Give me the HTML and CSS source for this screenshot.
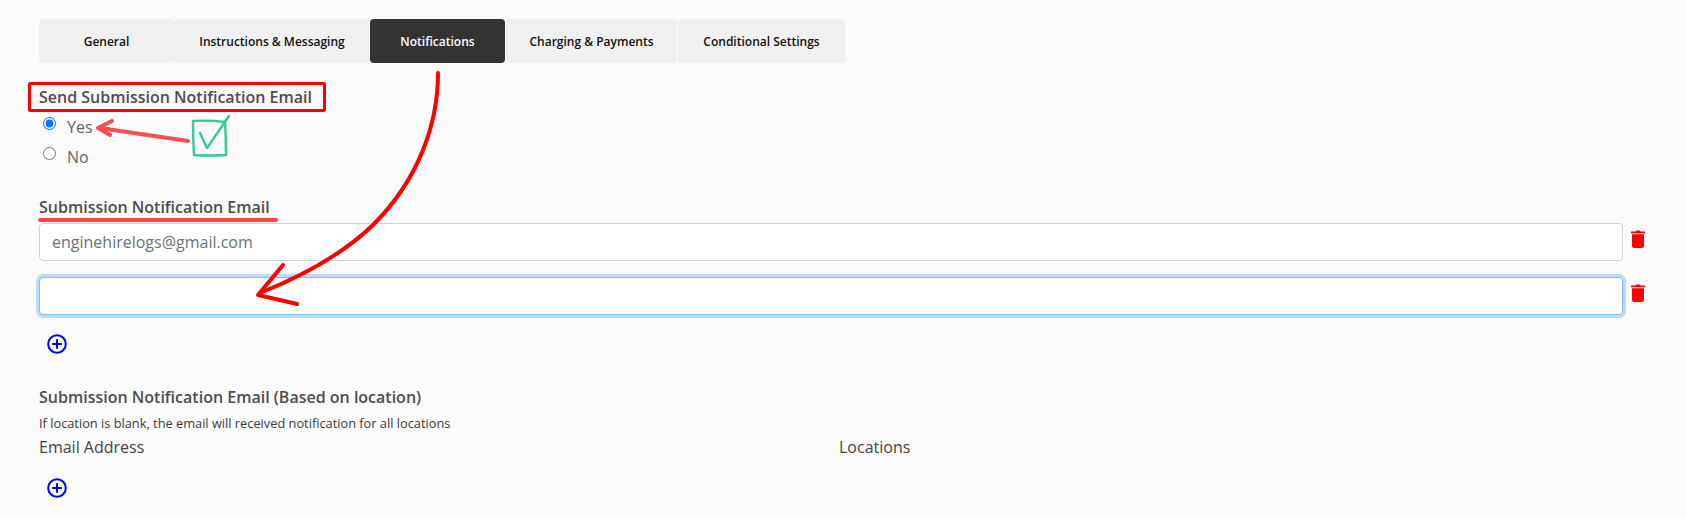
FILE: index.html
```html
<!DOCTYPE html>
<html lang="en">
<head>
<meta charset="utf-8">
<title>Notifications</title>
<link rel="stylesheet" href="styles.css">
</head>
<body>
<main class="page">
  <nav class="tabs">
    <a class="tab tab-general">General</a>
    <a class="tab tab-instructions">Instructions &amp; Messaging</a>
    <a class="tab tab-notifications active">Notifications</a>
    <a class="tab tab-charging">Charging &amp; Payments</a>
    <a class="tab tab-conditional">Conditional Settings</a>
  </nav>

  <section class="send">
    <h2 class="heading">Send Submission Notification Email</h2>
    <div class="radios">
      <label class="radio-row"><input type="radio" name="send" checked><span>Yes</span></label>
      <label class="radio-row"><input type="radio" name="send"><span>No</span></label>
    </div>
  </section>

  <section class="emails">
    <h2 class="heading">Submission Notification Email</h2>
    <div class="email-row">
      <input class="field" type="text" value="enginehirelogs@gmail.com">
      <svg class="trash" viewBox="0 0 14 18"><path d="M4.5 1.6 5.2.5h3.6l.7 1.1H14v1.7H0V1.6zM1 4.3h12V16a2 2 0 0 1-2 2H3a2 2 0 0 1-2-2z"/></svg>
    </div>
    <div class="email-row">
      <input class="field focused" type="text">
      <svg class="trash" viewBox="0 0 14 18"><path d="M4.5 1.6 5.2.5h3.6l.7 1.1H14v1.7H0V1.6zM1 4.3h12V16a2 2 0 0 1-2 2H3a2 2 0 0 1-2-2z"/></svg>
    </div>
    <svg class="plus" viewBox="0 0 20 20"><circle cx="10" cy="10" r="8.8"/><path d="M10 5.2v9.6M5.2 10h9.6"/></svg>
  </section>

  <section class="based">
    <h2 class="heading">Submission Notification Email (Based on location)</h2>
    <p class="hint">If location is blank, the email will received notification for all locations</p>
    <div class="columns">
      <span>Email Address</span>
      <span>Locations</span>
    </div>
    <svg class="plus" viewBox="0 0 20 20"><circle cx="10" cy="10" r="8.8"/><path d="M10 5.2v9.6M5.2 10h9.6"/></svg>
  </section>
</main>

<div class="note-box"></div>
<div class="note-underline"></div>
<svg class="annotations" viewBox="0 0 1686 519" width="1686" height="519">
  <g class="coral">
    <path d="M188 141 100 128"/>
    <path d="M112 121 98 128 110 135"/>
  </g>
  <g class="green">
    <path class="thin" d="M193 121Q210 120 225 122 226 138 226 155 210 156 194 155 193 138 193 121z"/>
    <path class="thin" d="M200 133 207 148 229 116"/>
  </g>
  <g class="red">
    <path d="M438 73C438 125 418 180 373 225 345 252 305 275 260 293"/>
    <path d="M283 265 258 295 297 304"/>
  </g>
</svg>
</body>
</html>
```

FILE: styles.css
```css
* { box-sizing: border-box; }

html, body { margin: 0; height: 100%; }

body {
  background: #fbfbfb;
  color: #444;
  font-family: "Open Sans", "Liberation Sans", sans-serif;
  overflow: hidden;
}

.page { padding: 19px 41px 0 39px; }

.tabs { display: flex; height: 44px; }

.tab {
  display: flex;
  align-items: center;
  justify-content: center;
  background: #f0f0f0;
  border-radius: 4px;
  color: #111;
  font-size: 12px;
  font-weight: 600;
}
.tab-general { width: 135px; }
.tab-instructions { width: 196px; }
.tab-notifications { width: 135px; }
.tab-charging { width: 171px; margin-left: 1px; }
.tab-conditional { width: 167px; margin-left: 1px; }
.tab.active { background: #333; color: #fff; }

.heading {
  margin: 0;
  font-size: 16px;
  font-weight: 600;
  line-height: 22px;
  color: #4d4d4d;
}

.send { margin-top: 23px; }

.radios { margin-top: 4px; }

.radio-row {
  display: flex;
  align-items: center;
  height: 30px;
  font-size: 16px;
  color: #666;
}
.radio-row input { width: 13px; height: 13px; margin: 0 11px 8px 4px; accent-color: #0075ff; }

.emails { margin-top: 24px; }

.email-row {
  display: flex;
  align-items: center;
  gap: 8px;
  margin-top: 5px;
  margin-bottom: 16px;
}
.email-row:last-of-type { margin-bottom: 0; }

.field {
  flex: 1;
  height: 38px;
  padding: 6px 12px;
  border: 1px solid #ced4da;
  border-radius: 4px;
  background: #fff;
  color: #6c7278;
  font: 16px "Open Sans", "Liberation Sans", sans-serif;
  outline: none;
}
.field.focused {
  border-color: #80bdff;
  box-shadow: 0 0 0 3px rgba(0, 123, 255, .25);
}

.trash { flex: none; width: 14px; height: 18px; margin-bottom: 6px; fill: #f00; }

.plus {
  display: block;
  width: 20px;
  height: 20px;
  margin: 19px 0 0 8px;
  fill: none;
  stroke: #00f;
  stroke-width: 2;
}

.based { margin-top: 32px; }

.hint { margin: 6px 0 0; font-size: 12.8px; line-height: 18px; color: #3a3a3a; }

.columns {
  display: grid;
  grid-template-columns: 800px 1fr;
  margin-top: 3px;
  font-size: 16px;
  line-height: 24px;
  color: #444;
}

.note-box {
  position: absolute;
  left: 28px;
  top: 82px;
  width: 298px;
  height: 30px;
  border: 3.5px solid #f00;
  border-radius: 2px;
}

.note-underline {
  position: absolute;
  left: 38px;
  top: 218px;
  width: 240px;
  height: 4px;
  border-radius: 2px;
  background: #ff4444;
}

.annotations {
  position: absolute;
  left: 0;
  top: 0;
  pointer-events: none;
  fill: none;
  stroke-linecap: round;
  stroke-linejoin: round;
}
.coral { stroke: #ff4d4d; stroke-width: 4; }
.green { stroke: #35c99c; stroke-width: 2.5; }
.green .thin { stroke-width: 2.4; }
.red { stroke: #f00; stroke-width: 4; }
```
